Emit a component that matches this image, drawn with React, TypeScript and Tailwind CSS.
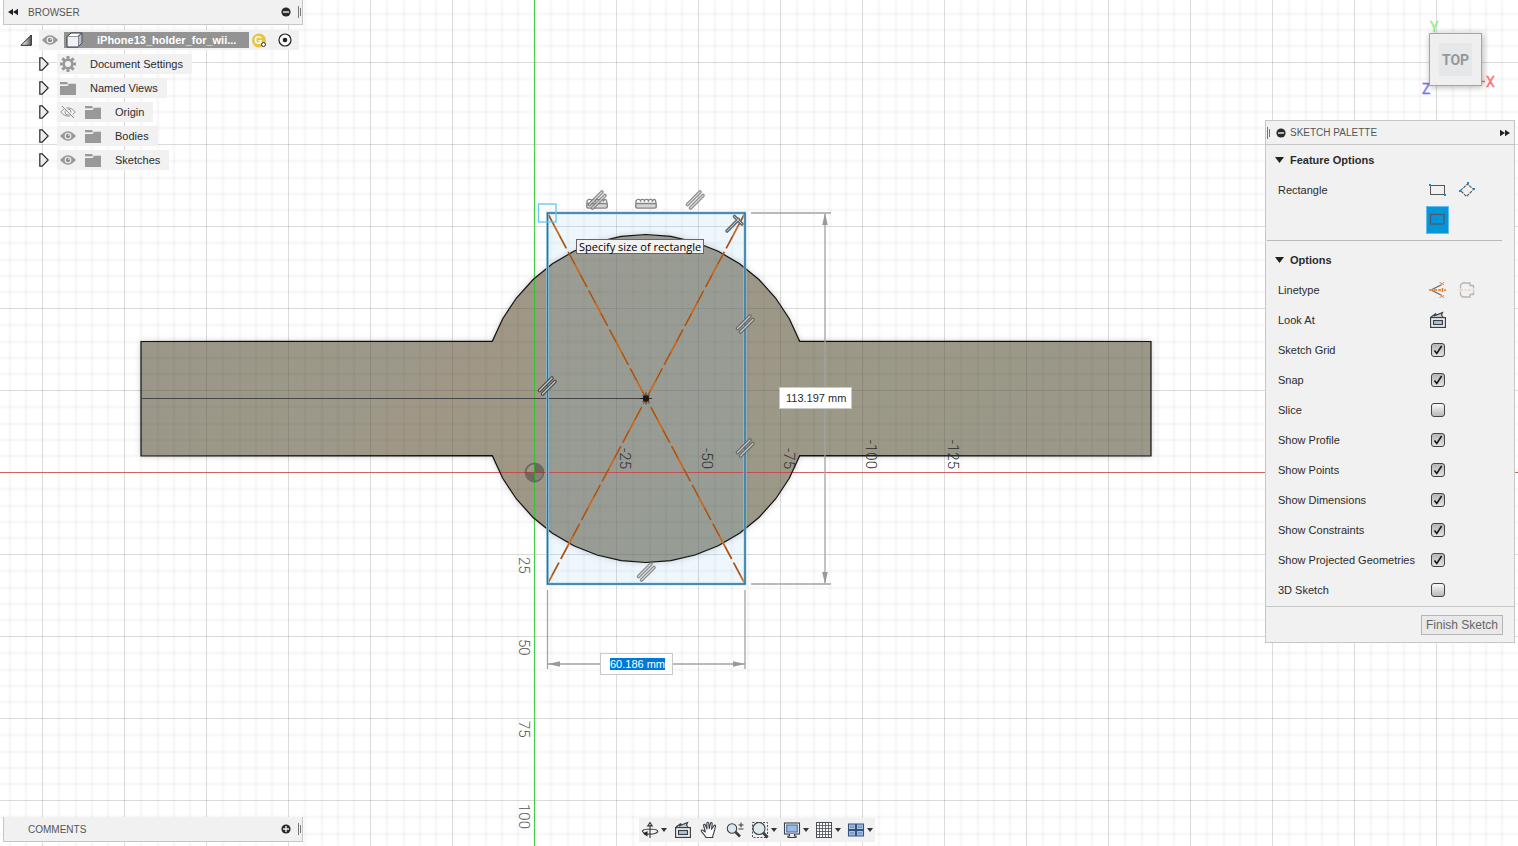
import { useEffect, useRef, useState } from 'react';
import type { ReactNode } from 'react';

const ORIGIN = { x: 534.5, y: 472.5 };
const MAJOR = 82;
const CENTER = { x: 646, y: 398.5 };
const RADIUS = 164;

// faceted arc, angles in degrees from straight up
function arc(from: number, to: number, steps = 16) {
  return Array.from({ length: steps + 1 }, (_, i) => {
    const a = ((from + ((to - from) * i) / steps) * Math.PI) / 180;
    return `${(CENTER.x + RADIUS * Math.sin(a)).toFixed(1)},${(CENTER.y - RADIUS * Math.cos(a)).toFixed(1)}`;
  });
}

const BODY = [
  '141,341.5',
  ...arc(-69.6, 69.6),
  '1151,341.5',
  '1151,456',
  ...arc(110.4, 249.6),
  '141,456',
].join(' ');

const X_LABELS = [
  { text: '-25', x: 620 },
  { text: '-50', x: 702 },
  { text: '-75', x: 784 },
  { text: '-100', x: 866 },
  { text: '-125', x: 948 },
];

const Y_LABELS = [
  { text: '25', y: 557 },
  { text: '50', y: 639 },
  { text: '75', y: 721 },
  { text: '100', y: 804 },
];

function Parallel({ x, y, color = '#777' }: { x: number; y: number; color?: string }) {
  return (
    <g transform={`translate(${x} ${y})`} strokeLinecap="round" opacity="0.85">
      <path d="M-7.500 4.500L5 -8M-4.500 8L8 -4.500" stroke={color} strokeWidth="3.600" />
      <path d="M-7.500 4.500L5 -8M-4.500 8L8 -4.500" stroke="#d0d0d0" strokeWidth="1.200" />
    </g>
  );
}

function Horizontal({ x, y }: { x: number; y: number }) {
  return (
    <g transform={`translate(${x} ${y})`} fill="none" stroke="#858585" strokeWidth="1.4">
      <rect x="-10.3" y="-0.5" width="20.6" height="4.6" rx="1.5" fill="#d5d5d5" />
      <path d="M-10 0v-3q1-2 3-1.6t1.4 2.4q0-2.6 2.2-2.4t1.8 2.4q0-2.6 2.2-2.4t1.8 2.4q0-2.6 2.2-2.4t1.8 2.4q.4-2.6 2.4-2.2q1 .4 1.2 4.4" />
    </g>
  );
}

function SketchCanvas() {
  return (
    <svg className="absolute inset-0 h-full w-full" fill="none" aria-label="Sketch canvas">
      <defs>
        <pattern id="minor" x={ORIGIN.x} y={ORIGIN.y} width={MAJOR} height={MAJOR} patternUnits="userSpaceOnUse">
          {[16, 33, 49, 65].map(n => (
            <g key={n}>
              <rect x={n - 0.5} width="2" height={MAJOR} fill="#000" opacity="0.04" />
              <rect y={n - 0.5} width={MAJOR} height="2" fill="#000" opacity="0.04" />
            </g>
          ))}
        </pattern>
        <pattern id="major" x={ORIGIN.x - 0.5} y={ORIGIN.y - 0.5} width={MAJOR} height={MAJOR} patternUnits="userSpaceOnUse">
          <path d={`M0.5 0V${MAJOR}M0 0.5H${MAJOR}`} stroke="#000" strokeOpacity="0.14" />
        </pattern>
        <linearGradient id="metal" x1="0" y1="0" x2="1" y2="0.3">
          <stop offset="0" stopColor="#9b9787" />
          <stop offset="0.35" stopColor="#9d9889" />
          <stop offset="0.4" stopColor="#a09786" />
          <stop offset="0.65" stopColor="#9d9787" />
          <stop offset="0.8" stopColor="#9c9988" />
          <stop offset="1" stopColor="#9b9789" />
        </linearGradient>
        <filter id="soft" x="-5%" y="-5%" width="110%" height="110%">
          <feDropShadow dx="0" dy="0" stdDeviation="3" floodColor="#000" floodOpacity="0.22" />
        </filter>
      </defs>

      <rect width="100%" height="100%" fill="url(#minor)" />
      <rect width="100%" height="100%" fill="url(#major)" />
      <polygon points={BODY} fill="url(#metal)" filter="url(#soft)" />
      <polygon points={BODY} fill="url(#minor)" />
      <polygon points={BODY} fill="url(#major)" opacity="0.7" />
      <rect x="548" y="213" width="197" height="371" fill="#7ec4ee" fillOpacity="0.13" />

      <line x1="0" x2="100%" y1="472.5" y2="472.5" stroke="#d23c3c" strokeOpacity="0.75" />
      <line x1="534.5" x2="534.5" y1="0" y2="100%" stroke="#2fcb2f" strokeOpacity="0.85" strokeWidth="1.2" />
      <polygon points={BODY} stroke="#111" strokeWidth="1.2" />

      {/* origin marker */}
      <g opacity="0.45">
        <circle cx="534.5" cy="472.5" r="9" stroke="#333" strokeWidth="1.8" />
        <path d="M534.5 472.5V464a8.5 8.5 0 0 1 8.5 8.5ZM534.5 472.5V481a8.5 8.5 0 0 1-8.5-8.5Z" fill="#333" />
        <path d="M534.5 472.5V481a8.5 8.5 0 0 0 8.5-8.5Z" fill="#333" fillOpacity="0.5" />
      </g>

      <g fontFamily="Roboto, sans-serif" fontSize="15" fontWeight="300">
        {X_LABELS.map(l => (
          <text key={l.text} transform={`translate(${l.x} 469) rotate(90)`} textAnchor="end" fill="#2c2c2c">
            {l.text}
          </text>
        ))}
        {Y_LABELS.map(l => (
          <text key={l.text} transform={`translate(519 ${l.y}) rotate(90)`} fill="#555">
            {l.text}
          </text>
        ))}
      </g>

      {/* dimensions */}
      <g stroke="#a3a3a3" strokeWidth="1.3">
        <path d="M751 213H831M751 584H831M825 214V583M547.5 590V669M745 590V669M548 664H745" />
        <g fill="#999" stroke="none">
          <path d="M825 213l2.8 12h-5.6zM825 584l2.8-12h-5.6zM548 664l12-2.8v5.6zM745 664l-12-2.8v5.6z" />
        </g>
      </g>

      <line x1="141" x2="646" y1="398.5" y2="398.5" stroke="#444" strokeWidth="1.2" />
      <g>
        <path d="M547.5 213L745 584M745 213L547.5 584" stroke="#c9691f" strokeWidth="1.8" strokeDasharray="40 4" />
        <path d="M547.5 213L745 584M745 213L547.5 584" stroke="#5d3c22" strokeOpacity="0.7" strokeWidth="0.8" strokeDasharray="14 12 14 4" />
      </g>
      <rect x="547.5" y="213" width="197.5" height="371" stroke="#a3d5ec" strokeOpacity="0.8" strokeWidth="3" />
      <rect x="547.5" y="213" width="197.5" height="371" stroke="#2d7099" strokeWidth="1.5" />
      <rect x="538.5" y="204" width="17.5" height="18" stroke="#63c5f5" strokeWidth="1.3" />

      <circle cx="646" cy="398.5" r="3.2" fill="#1c1c1c" />
      <path d="M640 398.5h12M646 392.5v12M642.5 395l7 7M649.5 395l-7 7" stroke="#1c1c1c" strokeWidth="0.8" />

      <Horizontal x={597} y={204} />
      <Parallel x={597} y={200} />
      <Horizontal x={646} y={204} />
      <Parallel x={695} y={200} />
      <Parallel x={745} y={324} color="#5c5f5f" />
      <Parallel x={745} y={448} color="#5c5f5f" />
      <Parallel x={547} y={386} color="#3c3c3c" />
      <Parallel x={646} y={572} />
      <g strokeLinecap="round">
        <path d="M727 231l11.500-11.500M734.500 216.500l7.500 7.500" stroke="#666e72" strokeWidth="3.600" />
        <path d="M727 231l11.500-11.500M734.500 216.500l7.500 7.500" stroke="#bcc6ca" strokeWidth="1" />
      </g>
    </svg>
  );
}

function MinusDot({ plus }: { plus?: boolean }) {
  return (
    <svg width="10" height="10" viewBox="0 0 10 10">
      <circle cx="5" cy="5" r="4.600" fill="#2b2b2b" />
      <path d={plus ? 'M2 5H8M5 2V8' : 'M2 5H8'} stroke="#f1f1f1" strokeWidth="1.4" />
    </svg>
  );
}

function DoubleArrow({ right }: { right?: boolean }) {
  return (
    <svg width="10" height="8" viewBox="0 0 10 8" fill="#222">
      <path d={right ? 'M0 .8l5 3.200-5 3.200zM5 .8l5 3.200-5 3.200z' : 'M10 .8L5 4l5 3.200zM5 .8L0 4l5 3.200z'} />
    </svg>
  );
}

function Grip() {
  return (
    <svg width="4" height="12" viewBox="0 0 4 12" shapeRendering="crispEdges">
      <path d="M.5 0v12M2.500 2v8" stroke="#777" />
    </svg>
  );
}

function Eye({ off }: { off?: boolean }) {
  return (
    <svg width="16" height="12" viewBox="0 0 16 12" fill="none">
      {off ? (
        <>
          <path d="M.6 6Q8-2.500 15.400 6Q8 14.500.6 6Z" stroke="#999" />
          <circle cx="8" cy="6" r="3" stroke="#999" />
          <path d="M2.500 0l12 12" stroke="#f1f1f1" strokeWidth="2.400" />
          <path d="M2 0l12 12" stroke="#8c8c8c" />
        </>
      ) : (
        <>
          <path d="M0 6Q8-3.400 16 6Q8 15.400 0 6Z" fill="#999" />
          <circle cx="8" cy="6" r="3.300" fill="#f1f1f1" />
          <circle cx="8" cy="6" r="2.200" fill="#8c8c8c" />
          <circle cx="8.800" cy="5.200" r="0.700" fill="#f1f1f1" />
        </>
      )}
    </svg>
  );
}

function Folder() {
  return (
    <svg width="16" height="13" viewBox="0 0 16 13" fill="#999">
      <path d="M0 0h7l1 1.800H16V13H0V4h7.400l1.400-1.400H0Z" />
      <path d="M0 3.100h7.200l1.600-1.300" stroke="#f1f1f1" strokeWidth="1" fill="none" />
    </svg>
  );
}

function Gear() {
  return (
    <svg width="16" height="16" viewBox="-8 -8 16 16">
      {[0, 45, 90, 135].map(a => (
        <rect key={a} x="-1.500" y="-8" width="3" height="16" fill="#999" transform={`rotate(${a})`} />
      ))}
      <circle r="5.400" fill="#999" />
      <circle r="3" fill="#f1f1f1" />
    </svg>
  );
}

function TreeArrow() {
  return (
    <button aria-label="Expand" className="flex w-[18px] shrink-0 items-center">
      <svg width="10" height="14" viewBox="0 0 10 14">
        <path d="M.8.8H3.200L9.200 7L3.200 13.200H.8Z" fill="#ececec" stroke="#2a2a2a" strokeWidth="1.200" />
      </svg>
    </button>
  );
}

const TREE: { label: string; icon: 'gear' | 'folder'; eye?: 'on' | 'off' }[] = [
  { label: 'Document Settings', icon: 'gear' },
  { label: 'Named Views', icon: 'folder' },
  { label: 'Origin', icon: 'folder', eye: 'off' },
  { label: 'Bodies', icon: 'folder', eye: 'on' },
  { label: 'Sketches', icon: 'folder', eye: 'on' },
];

function Browser() {
  return (
    <section className="w-[300px]">
      <header className="flex h-[25px] items-center border border-t-0 border-[#c6c6c6] bg-[#f1f1f1] pl-1 text-[#555]">
        <button aria-label="Collapse browser"><DoubleArrow /></button>
        <h2 className="ml-[10px] flex-1 text-[10px]">BROWSER</h2>
        <button aria-label="Minimize browser" className="mr-[7px]"><MinusDot /></button>
        <Grip />
      </header>

      <div className="mt-[5px] flex flex-col items-start gap-1">
        <div className="flex h-5 items-center pl-[17px]">
          <button aria-label="Collapse" className="w-[19px]">
            <svg width="12" height="12" viewBox="0 0 12 12">
              <defs>
                <linearGradient id="tri">
                  <stop offset="0.2" stopColor="#eee" />
                  <stop offset="1" stopColor="#555" />
                </linearGradient>
              </defs>
              <path d="M11.300 1V11.300H1Z" fill="url(#tri)" stroke="#222" />
            </svg>
          </button>
          <div className="flex h-5 items-center bg-[#f1f1f1] pl-[3px] pr-[7px]">
            <Eye />
            <div className="ml-[6px] flex h-4 w-[185px] items-center bg-[#939393] pl-[2px]">
              <svg width="17" height="16" viewBox="0 0 17 16" stroke="#333b44" strokeWidth="1" strokeLinejoin="round">
                <path d="M1 4.500L5 1H16L12 4.500Z" fill="#fff" />
                <path d="M12 4.500L16 1V11L12 15Z" fill="#b9bdc8" stroke="#4a5058" />
                <path d="M1 4.500H12V15H1Z" fill="#f0f1f6" stroke="none" />
                <path d="M1 4.500V15H12" fill="none" />
              </svg>
              <span className="ml-[14px] text-[11px] font-bold text-white">iPhone13_holder_for_wii...</span>
            </div>
            <svg className="ml-[3px]" width="15" height="15" viewBox="0 0 15 15">
              <circle cx="7" cy="7.500" r="7" fill="#e6c740" />
              <text x="6.500" y="11" textAnchor="middle" fontSize="10" fontWeight="700" fill="#fff">G</text>
              <circle cx="11.500" cy="11.500" r="2" fill="#fff" stroke="#333" />
            </svg>
            <button aria-label="Activate component" className="ml-[11px]">
              <svg width="14" height="14" viewBox="0 0 14 14">
                <circle cx="7" cy="7" r="6" fill="#fafafa" stroke="#222" strokeWidth="1.200" />
                <circle cx="7" cy="7" r="2.300" fill="#222" />
              </svg>
            </button>
          </div>
        </div>

        {TREE.map(item => (
          <div key={item.label} className="flex h-5 items-center pl-9">
            <TreeArrow />
            <div className="flex h-5 items-center bg-[#f1f1f1] pl-[3px] pr-[9px]">
              {item.eye && <span className="mr-[9px]"><Eye off={item.eye === 'off'} /></span>}
              {item.icon === 'gear' ? <Gear /> : <Folder />}
              <span className="ml-[14px] text-[11px]">{item.label}</span>
            </div>
          </div>
        ))}
      </div>
    </section>
  );
}

function ViewCube() {
  return (
    <svg className="mr-[15px] mt-[18px]" width="80" height="80" viewBox="0 0 80 80" fontFamily="'Liberation Sans Narrow', Roboto, sans-serif">
      <defs>
        <filter id="cube" x="-20%" y="-20%" width="140%" height="140%">
          <feDropShadow dx="1" dy="1" stdDeviation="3" floodOpacity="0.3" />
        </filter>
      </defs>
      <text x="10" y="14" fontSize="14" fill="#8cf08c" stroke="#8cf08c" strokeWidth="0.400">Y</text>
      <text x="66" y="69" fontSize="14" fill="#f77474" stroke="#f77474" strokeWidth="0.400">X</text>
      <text x="2" y="76" fontSize="14" fill="#7676f0" stroke="#7676f0" strokeWidth="0.400">Z</text>
      <path d="M62 63.500h3" stroke="#f77474" strokeWidth="1.500" />
      <rect x="9.500" y="15.500" width="52" height="52" fill="#efefef" stroke="#a5a5a5" filter="url(#cube)" />
      <rect x="19" y="25" width="33" height="33" fill="#e6e7e9" />
      <text x="35.500" y="47" textAnchor="middle" fontSize="14" fontWeight="700" fill="#93979b">TOP</text>
    </svg>
  );
}

function LookAtIcon() {
  return (
    <svg width="18" height="18" viewBox="0 0 18 18" fill="none" stroke="#3a4047" strokeWidth="1.200">
      <path d="M2 6L7 2.500L6 4.500L13.500 1.500L12.500 4L14 6" fill="#c3cad2" />
      <rect x="1.600" y="6.600" width="14.800" height="9.800" fill="#f7f7f7" />
      <rect x="4.500" y="9.500" width="9" height="4" fill="#b9c4d2" />
    </svg>
  );
}

function Section({ title, children }: { title: string; children: ReactNode }) {
  const [open, setOpen] = useState(true);
  return (
    <div>
      <button onClick={() => setOpen(!open)} aria-expanded={open} className="flex h-[30px] items-center pl-[9px] text-[11px] font-bold">
        <svg width="9" height="6" viewBox="0 0 9 6" className="mr-[6px]">
          <path d="M0 0H9L4.500 6Z" fill="#222" />
        </svg>
        {title}
      </button>
      {open && children}
    </div>
  );
}

function Row({ label, children }: { label: string; children: ReactNode }) {
  return (
    <div className="flex pl-3">
      <span className="w-[145px] shrink-0 leading-[30px]">{label}</span>
      <div className="grid auto-rows-[30px] grid-cols-[29px_29px] place-items-center">{children}</div>
    </div>
  );
}

const OPTIONS: [string, boolean][] = [
  ['Sketch Grid', true],
  ['Snap', true],
  ['Slice', false],
  ['Show Profile', true],
  ['Show Points', true],
  ['Show Dimensions', true],
  ['Show Constraints', true],
  ['Show Projected Geometries', true],
  ['3D Sketch', false],
];

function Option({ label, initial }: { label: string; initial: boolean }) {
  const [on, setOn] = useState(initial);
  return (
    <label className="flex h-[30px] items-center pl-3">
      <span className="w-[153px] shrink-0">{label}</span>
      <span className="grid place-items-center">
        <input
          type="checkbox"
          checked={on}
          onChange={e => setOn(e.target.checked)}
          className="col-start-1 row-start-1 h-[14px] w-[14px] appearance-none rounded-[3px] border border-[#444] bg-linear-to-b from-[#fafafa] to-[#b9b9b9] checked:from-[#b5b5b5] checked:to-[#e2e2e2]"
        />
        {on && (
          <svg className="pointer-events-none col-start-1 row-start-1" width="10" height="10" viewBox="0 0 10 10" fill="none">
            <path d="M1.500 5.500L3.800 8.500L8.600 1" stroke="#111" strokeWidth="1.500" />
          </svg>
        )}
      </span>
    </label>
  );
}

function SketchPalette() {
  return (
    <section className="mt-[22px] w-[250px] border border-[#c6c6c6] bg-[#f1f1f1] text-[11px]">
      <header className="flex h-6 items-center border-b border-[#c6c6c6] pl-px text-[#555]">
        <Grip />
        <button aria-label="Minimize palette" className="ml-[5px]"><MinusDot /></button>
        <h2 className="ml-1 flex-1 text-[10px]">SKETCH PALETTE</h2>
        <button aria-label="Dock palette" className="mr-1"><DoubleArrow right /></button>
      </header>

      <Section title="Feature Options">
        <Row label="Rectangle">
          <button aria-label="2-Point Rectangle">
            <svg width="17" height="14" viewBox="0 0 17 14" fill="none">
              <rect x="1.500" y="2.500" width="14" height="9" stroke="#555" />
              <path d="M0 1h2v2H0zM15 11h2v2h-2z" fill="#0d8ce0" />
            </svg>
          </button>
          <button aria-label="3-Point Rectangle">
            <svg width="16" height="16" viewBox="0 0 16 16" fill="none">
              <path d="M1.500 8.500L8.500 2L14.500 7.500L7.500 14.500Z" stroke="#555" strokeDasharray="3 1" strokeWidth="1.100" />
              <path d="M0 8h2v2H0zM8 0h2v2H8zM14 6h2v2h-2z" fill="#0d8ce0" />
            </svg>
          </button>
          <button aria-label="Center Rectangle" className="flex h-7 w-[23px] items-center justify-center border border-[#5fbdf0] bg-[#0696d7]">
            <svg width="17" height="14" viewBox="0 0 17 14" fill="none">
              <rect x="1.500" y="1.500" width="13.500" height="9.500" stroke="#4c5a66" strokeWidth="1.200" />
              <path d="M7 5.500h2v2H7zM14 10.500h2v2h-2z" fill="#0d7fe0" />
            </svg>
          </button>
        </Row>
      </Section>
      <hr className="ml-px mr-3 mt-[5px] border-[#b9b9b9]" />

      <div className="mt-1 pb-px">
        <Section title="Options">
          <Row label="Linetype">
            <button aria-label="Construction">
              <svg width="17" height="18" viewBox="0 0 17 18" fill="none">
                <path d="M13 3.500L3 8.500M13 14.500L3 9.500" stroke="#666" strokeWidth="1.300" />
                <path d="M0 9h4M5 9h3M9 9h3M13.500 7v4M15 9h2" stroke="#e8731c" strokeWidth="1.400" />
                <path d="M10.500 1.500l4.500 2M15 1l-3.500 3.500M10.500 16.500l4.500-2M15 17l-3.500-3.500" stroke="#e08a55" />
              </svg>
            </button>
            <button aria-label="Centerline">
              <svg width="16" height="16" viewBox="0 0 16 16" fill="none">
                <path d="M1.500 6.500V3L3.500 1H11V3.500H14.500V6.500M1.500 9.500V13L3.500 15H11V12.500H14.500V9.500" stroke="#b5b5b5" strokeWidth="1.300" />
                <path d="M0 8h4M5.500 8h2M9 8h3M13.500 8H16" stroke="#f0c0a0" strokeWidth="1.200" />
              </svg>
            </button>
          </Row>
          <Row label="Look At">
            <button aria-label="Look At"><LookAtIcon /></button>
          </Row>
          {OPTIONS.map(([label, on]) => <Option key={label} label={label} initial={on} />)}
        </Section>
      </div>

      <footer className="flex justify-end border-t border-[#c6c6c6] pb-[7px] pr-[11px] pt-2">
        <button className="h-5 w-[82px] whitespace-nowrap border border-[#b5b5b5] bg-[#e9e9e9] text-[12px] text-[#666]">Finish Sketch</button>
      </footer>
    </section>
  );
}

function Caret() {
  return (
    <svg width="6" height="4" viewBox="0 0 6 4" className="ml-[2px]">
      <path d="M0 0H6L3 4Z" fill="#333" />
    </svg>
  );
}

const TOOLS: { name: string; menu?: boolean; icon: ReactNode }[] = [
  {
    name: 'Orbit',
    menu: true,
    icon: (
      <svg width="18" height="18" viewBox="0 0 18 18" fill="none" stroke="#3a4047" strokeWidth="1.200">
        <path d="M9 4V17M6.800 4.800L9 1.500L11.200 4.800ZM5 12.500C-1 11 1 8 9 8S19 11 14 12.500Q12 13.200 6 13" />
        <path d="M2 12.800L6.500 10V15.500Z" fill="#222" stroke="none" />
      </svg>
    ),
  },
  { name: 'Look At', icon: <LookAtIcon /> },
  {
    name: 'Pan',
    icon: (
      <svg width="18" height="18" viewBox="0 0 18 18" fill="#fafafa" stroke="#3a4047" strokeWidth="1.100" strokeLinejoin="round">
        <path d="M6 16.500C5 14 2.500 12 1.300 10.200C.8 9 2.400 8.500 3.300 9.500L5.300 11L3.600 4.500C3.400 3 5 2.800 5.400 4L7 8L6.800 2.300C6.800.9 8.600.9 8.700 2.300L9.200 7.500L10.500 2.400C10.900 1.100 12.400 1.500 12.200 2.900L11.500 8.200L14 4.600C14.800 3.600 16 4.400 15.500 5.500C14.500 8 14.500 12 12.800 14.500V16.500Z" />
      </svg>
    ),
  },
  {
    name: 'Zoom',
    icon: (
      <svg width="18" height="18" viewBox="0 0 18 18" fill="none" stroke="#3a4047" strokeWidth="1.100">
        <circle cx="6" cy="7.500" r="4.700" fill="#dbe9ee" />
        <path d="M9.500 11L14 15.500" strokeWidth="2.600" />
        <path d="M12.500 4H17.500M15 1.500V6.500M12.500 8H17.500" strokeWidth="1.100" />
      </svg>
    ),
  },
  {
    name: 'Zoom Window',
    menu: true,
    icon: (
      <svg width="18" height="18" viewBox="0 0 18 18" fill="none" stroke="#3a4047">
        <path d="M1.500 1.500H16.500V16.500H1.500Z" strokeDasharray="2 1.500" strokeWidth="0.900" />
        <circle cx="8" cy="7.500" r="6" fill="#dcebea" strokeWidth="1.100" />
        <path d="M12.500 12L16.500 16.500" strokeWidth="2.800" />
      </svg>
    ),
  },
  {
    name: 'Display Settings',
    menu: true,
    icon: (
      <svg width="18" height="18" viewBox="0 0 18 18" fill="none" stroke="#3a4047" strokeWidth="1.100">
        <rect x="1.500" y="2" width="15" height="11" fill="#f4f4f4" />
        <rect x="3.700" y="4" width="10.600" height="7" fill="#9bbbe6" stroke="#4f70a5" />
        <path d="M6.500 13V15H5V16.500H13V15H11.500V13" fill="#eee" />
      </svg>
    ),
  },
  {
    name: 'Grid and Snaps',
    menu: true,
    icon: (
      <svg width="18" height="18" viewBox="0 0 18 18" fill="none" stroke="#4a4f55">
        <rect x="1.500" y="1.500" width="15" height="15" fill="#fafafa" />
        <path d="M4.500 1.500v15M7.500 1.500v15M10.500 1.500v15M13.500 1.500v15M1.500 4.500h15M1.500 7.500h15M1.500 10.500h15M1.500 13.500h15" strokeWidth="0.800" />
      </svg>
    ),
  },
  {
    name: 'Viewports',
    menu: true,
    icon: (
      <svg width="18" height="18" viewBox="0 0 18 18" fill="#a9c2e8" stroke="#34507c" strokeWidth="1.100">
        <path d="M1.500 3h7v5.500h-7zM9.500 3h7v5.500h-7zM1.500 9.500h7V15h-7zM9.500 9.500h7V15h-7z" />
        <path d="M3.500 5h3v1.500h-3zM11.500 5h3v1.500h-3zM3.500 11.500h3V13h-3zM11.500 11.500h3V13h-3z" stroke="#6d8cc0" strokeWidth="0.800" />
      </svg>
    ),
  },
];

function NavBar() {
  return (
    <nav className="flex h-6 items-center gap-[6px] bg-[#f1f1f1] px-[2px]">
      {TOOLS.map(tool => (
        <button key={tool.name} aria-label={tool.name} className={tool.menu ? 'flex items-center' : 'px-px'}>
          {tool.icon}
          {tool.menu && <Caret />}
        </button>
      ))}
    </nav>
  );
}

function DimensionInputs() {
  const widthRef = useRef<HTMLInputElement>(null);

  useEffect(() => {
    widthRef.current?.focus();
    widthRef.current?.select();
  }, []);

  return (
    <>
      <div className="absolute left-[576px] top-[239px] h-[15px] whitespace-nowrap border border-[#666] bg-[#f2f2f2] px-[2px] font-['Open_Sans','DejaVu_Sans',sans-serif] text-[11px] leading-[13px] text-black">
        Specify size of rectangle
      </div>
      <input
        aria-label="Height"
        defaultValue="113.197 mm"
        className="absolute left-[779px] top-[387px] h-[22px] w-[73px] border border-[#c9c9c9] bg-white pl-[6px] text-[11px] outline-none"
      />
      <input
        ref={widthRef}
        aria-label="Width"
        defaultValue="60.186 mm"
        className="absolute left-[600px] top-[653px] h-[22px] w-[73px] border border-[#c9c9c9] bg-white pl-[9px] text-[11px] outline-none selection:bg-[#0078d7] selection:text-white"
      />
    </>
  );
}

export default function App() {
  return (
    <main className="relative flex min-h-screen flex-col justify-between overflow-hidden bg-white font-['Liberation_Sans',Arial,sans-serif] text-[#2b2b2b]">
      <SketchCanvas />
      <DimensionInputs />

      <div className="pointer-events-none relative flex items-start justify-between px-[3px] *:pointer-events-auto">
        <Browser />
        <div className="flex flex-col items-end">
          <ViewCube />
          <SketchPalette />
        </div>
      </div>

      <div className="relative grid grid-cols-[1fr_auto_1fr] items-end pb-1 pl-[3px] pr-2">
        <section className="flex h-[25px] w-[300px] items-center border border-t-0 border-[#c6c6c6] bg-[#f1f1f1] pl-6 text-[#555]">
          <h2 className="flex-1 text-[10px]">COMMENTS</h2>
          <button aria-label="Expand comments" className="mr-[7px]"><MinusDot plus /></button>
          <Grip />
        </section>
        <NavBar />
      </div>
    </main>
  );
}
